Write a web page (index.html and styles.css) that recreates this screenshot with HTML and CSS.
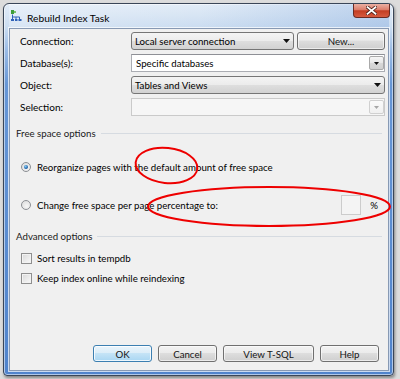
FILE: index.html
```html
<!DOCTYPE html>
<html>
<head>
<meta charset="utf-8">
<link rel="stylesheet" href="styles.css">
</head>
<body>
<div class="window">
  <div class="titlebar">
    <svg class="app-icon" width="11" height="11" viewBox="0 0 11 11">
      <rect x="0" y="0" width="3" height="4" fill="#3f9e3a"/>
      <rect x="3" y="1" width="2" height="2" fill="#7cc36a"/>
      <path d="M1.5 4.5v2.5h7M5 7v2M8.5 7v2M1.5 7v2" stroke="#2f62b8" stroke-width="1" fill="none"/>
      <rect x="0" y="9" width="3" height="2" fill="#2f62b8"/>
      <rect x="4" y="9" width="2.5" height="2" fill="#2f62b8"/>
      <rect x="7.5" y="9" width="3" height="2" fill="#2f62b8"/>
    </svg>
    <span class="title">Rebuild Index Task</span>
    <div class="close">
      <svg width="11" height="9" viewBox="0 0 11 9">
        <path d="M1.5 1.2L9.5 7.8M9.5 1.2L1.5 7.8" stroke="#4a1b14" stroke-width="3.4" stroke-linecap="square"/>
        <path d="M1.5 1.2L9.5 7.8M9.5 1.2L1.5 7.8" stroke="#ffffff" stroke-width="1.8" stroke-linecap="square"/>
      </svg>
    </div>
  </div>
  <div class="client">
    <div class="form">
      <span class="label">Connection:</span>
      <div class="conn-row">
        <div class="combo list"><span>Local server connection</span><svg class="arrow" width="7" height="4" viewBox="0 0 7 4"><path d="M0 0h7L3.5 4z" fill="#111"/></svg></div>
        <button class="btn new">New...</button>
      </div>
      <span class="label">Database(s):</span>
      <div class="combo edit"><span>Specific databases</span><div class="drop-btn"><svg width="5" height="3" viewBox="0 0 5 3"><path d="M0 0h5L2.5 3z" fill="#111"/></svg></div></div>
      <span class="label">Object:</span>
      <div class="combo list"><span>Tables and Views</span><svg class="arrow" width="7" height="4" viewBox="0 0 7 4"><path d="M0 0h7L3.5 4z" fill="#111"/></svg></div>
      <span class="label">Selection:</span>
      <div class="combo edit disabled"><span></span><div class="drop-btn"><svg width="5" height="3" viewBox="0 0 5 3"><path d="M0 0h5L2.5 3z" fill="#a6a6a6"/></svg></div></div>
    </div>

    <div class="group-head first">Free space options</div>
    <div class="option radio-row first-radio"><span class="radio checked"></span><span>Reorganize pages with the default amount of free space</span></div>
    <div class="option radio-row pct-row"><span class="radio"></span><span>Change free space per page percentage to:</span><span class="pct-input"></span><span class="pct">%</span></div>

    <div class="group-head second">Advanced options</div>
    <div class="option check-row check1"><span class="checkbox"></span><span>Sort results in tempdb</span></div>
    <div class="option check-row check2"><span class="checkbox"></span><span>Keep index online while reindexing</span></div>

    <div class="buttons">
      <button class="btn ok">OK</button>
      <button class="btn">Cancel</button>
      <button class="btn wide">View T-SQL</button>
      <button class="btn">Help</button>
    </div>
  </div>
</div>
<svg class="annotations" width="400" height="379" viewBox="0 0 400 379">
  <ellipse cx="166.5" cy="165.5" rx="31" ry="17.5" transform="rotate(6 166.5 165.5)" fill="none" stroke="#ee0000" stroke-width="2"/>
  <ellipse cx="269" cy="206.5" rx="121" ry="19.5" fill="none" stroke="#ee0000" stroke-width="2"/>
</svg>
</body>
</html>
```
FILE: styles.css
```css
html, body {
  margin: 0;
  padding: 0;
}
body {
  width: 400px;
  height: 379px;
  overflow: hidden;
  position: relative;
  background: #dcdcdc;
  font-family: Lato, "Liberation Sans", sans-serif;
  font-size: 9.7px;
  color: #000;
}
.window {
  margin: 3px 0 0 3px;
  width: 391px;
  height: 373px;
  box-sizing: border-box;
  border: 1px solid #3a4658;
  border-radius: 6px 6px 4px 4px;
  padding: 0 4px 4px 5px;
  display: flex;
  flex-direction: column;
  background: linear-gradient(to bottom, #e2ecf7 0, #cddef1 22px, #9dbde6 45px, #6696d6 80px, #4f83cc 100%);
  box-shadow: 1px 2px 3px rgba(0, 0, 0, 0.4), inset 0 0 0 1px rgba(255, 255, 255, 0.55);
}
.titlebar {
  height: 24px;
  display: flex;
  align-items: flex-start;
  background: linear-gradient(to right, rgba(255,255,255,0.25), rgba(255,255,255,0) 50%, rgba(90,140,210,0.25));
}
.app-icon {
  margin: 6px 0 0 2px;
  flex: none;
}
.title {
  margin: 8px 0 0 5px;
  line-height: 13px;
  font-size: 10.2px;
  color: #000;
}
.close {
  margin-left: auto;
  margin-right: -1px;
  width: 37px;
  height: 14px;
  box-sizing: border-box;
  border: 1px solid #6a2a22;
  border-top: none;
  border-radius: 0 0 4px 4px;
  background: linear-gradient(#eab0a3, #dc7c69 45%, #c33d22 52%, #d65a3f 100%);
  display: flex;
  align-items: center;
  justify-content: center;
}
.client {
  flex: 1;
  display: flex;
  flex-direction: column;
  background: #f0f0f0;
  border: 1px solid #8799b3;
  box-shadow: 0 0 0 1px rgba(255, 255, 255, 0.7);
}
.form {
  display: grid;
  grid-template-columns: 111px 1fr;
  grid-auto-rows: 18px;
  row-gap: 4px;
  align-items: center;
  margin-top: 3px;
  padding: 0 3px 0 10px;
}
.label {
  font-size: 10px;
}
.conn-row {
  display: flex;
  gap: 3px;
  height: 18px;
}
.conn-row .combo {
  flex: 1;
}
.combo {
  height: 18px;
  box-sizing: border-box;
  display: flex;
  align-items: center;
  padding-left: 3px;
  white-space: nowrap;
}
.combo.list {
  border: 1px solid #767676;
  border-radius: 3px;
  background: linear-gradient(#f4f4f4, #ececec 48%, #dedede 52%, #d2d2d2);
}
.combo .arrow {
  margin-left: auto;
  margin-right: 3px;
}
.combo.edit {
  border: 1px solid #abadb3;
  border-top-color: #8e9096;
  background: #fff;
  padding-left: 4px;
}
.drop-btn {
  margin-left: auto;
  width: 15px;
  height: 14px;
  box-sizing: border-box;
  border: 1px solid #a9a9a9;
  border-radius: 2px;
  background: linear-gradient(#f6f6f6, #e6e6e6 50%, #d8d8d8 51%, #d0d0d0);
  display: flex;
  align-items: center;
  justify-content: center;
}
.combo.disabled {
  background: #f6f6f6;
  border-color: #cacaca;
}
.combo.disabled .drop-btn {
  border-color: #d0d0d0;
  background: linear-gradient(#fafafa, #f0f0f0);
}
.btn {
  font: inherit;
  color: #151515;
  height: 17px;
  box-sizing: border-box;
  padding: 0;
  border: 1px solid #707070;
  border-radius: 3px;
  background: linear-gradient(#f3f3f3, #ebebeb 45%, #dddddd 50%, #cfcfcf);
  box-shadow: inset 0 0 0 1px rgba(255, 255, 255, 0.6);
}
.btn.new {
  width: 88px;
  height: 18px;
}
.group-head {
  display: flex;
  align-items: center;
  gap: 5px;
  padding: 0 6px;
  line-height: 13px;
  color: #1a1a1a;
}
.group-head::after {
  content: "";
  flex: 1;
  height: 1px;
  background: #d6dbe1;
}
.group-head.first {
  margin-top: 11px;
}
.group-head.second {
  margin-top: 15px;
}
.option {
  display: flex;
  align-items: center;
  line-height: 14px;
  padding-left: 11px;
  white-space: nowrap;
}
.radio {
  width: 10px;
  height: 10px;
  box-sizing: border-box;
  border-radius: 50%;
  border: 1px solid #8c8f94;
  background: radial-gradient(circle at 60% 65%, #f6f6f6, #d9d9d9);
  margin-right: 6px;
  display: flex;
  align-items: center;
  justify-content: center;
}
.radio.checked::after {
  content: "";
  width: 4px;
  height: 4px;
  border-radius: 50%;
  background: radial-gradient(circle at 40% 35%, #8ad0f5, #2266ae 60%, #123f7c);
}
.first-radio {
  margin-top: 20px;
}
.pct-row {
  margin-top: 21px;
  height: 20px;
  padding-right: 10px;
}
.pct-input {
  margin-left: auto;
  width: 20px;
  height: 20px;
  box-sizing: border-box;
  border: 1px solid #cccccc;
  background: #f4f4f4;
}
.pct {
  margin-left: 9px;
}
.checkbox {
  width: 11px;
  height: 11px;
  box-sizing: border-box;
  border: 1px solid #8f8f8f;
  background: linear-gradient(135deg, #d8d8d8, #fafafa);
  box-shadow: inset 0 0 0 1px #f2f2f2;
  margin-right: 5px;
}
.check1 {
  margin-top: 8px;
}
.check2 {
  margin-top: 6px;
}
.buttons {
  margin-top: auto;
  display: flex;
  justify-content: flex-end;
  gap: 6px;
  padding: 0 9px 8px 0;
}
.buttons .btn {
  width: 59px;
}
.buttons .btn.wide {
  width: 91px;
}
.buttons .btn.ok {
  border-color: #3c7fb1;
  background: linear-gradient(#eaf5fc, #dcedf8 45%, #c4e3f6 50%, #a9d6f2);
  box-shadow: inset 0 0 0 1px rgba(255, 255, 255, 0.8);
}
.annotations {
  position: absolute;
  top: 0;
  left: 0;
  pointer-events: none;
}
```
